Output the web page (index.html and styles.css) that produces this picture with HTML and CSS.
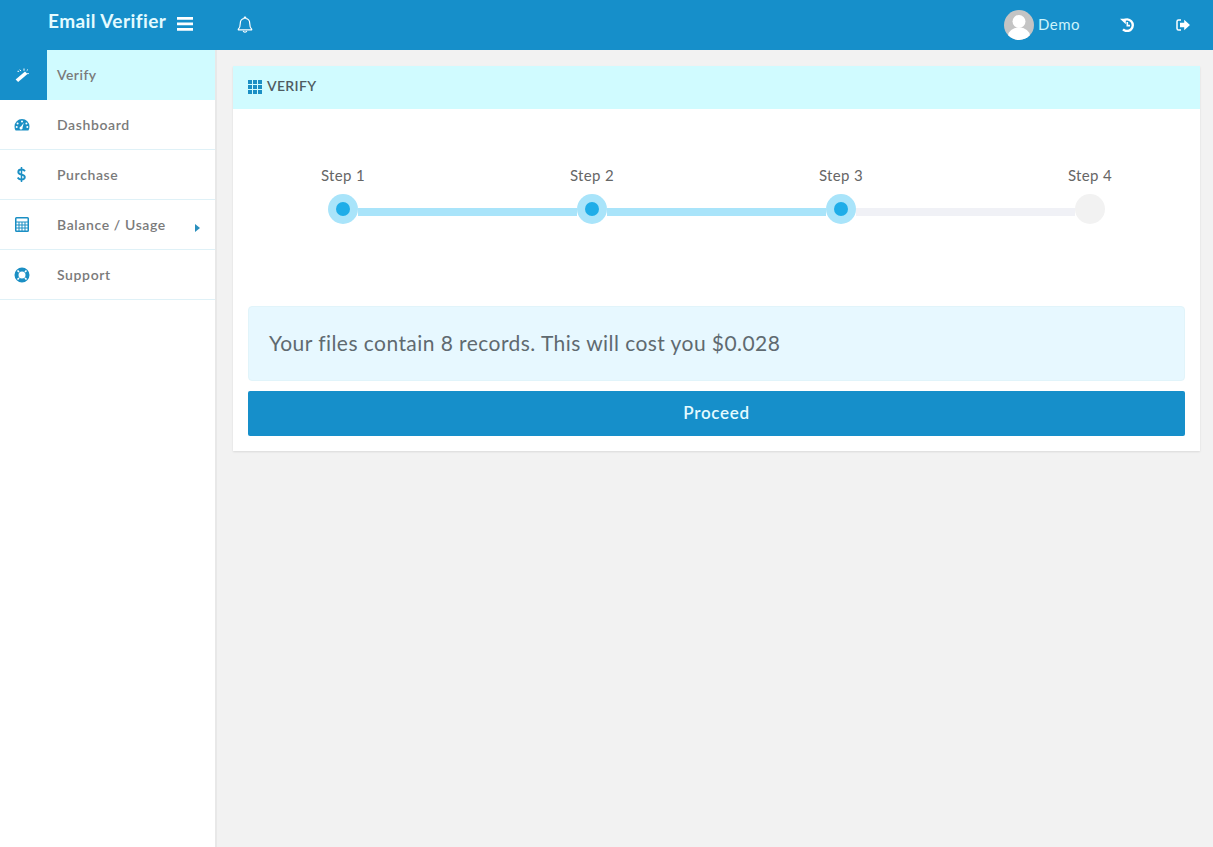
FILE: index.html
```html
<!DOCTYPE html>
<html lang="en">
<head>
<meta charset="utf-8">
<title>Email Verifier</title>
<link rel="stylesheet" href="styles.css">
</head>
<body>
<header class="topbar">
  <div class="brand">
    <span class="brand-name">Email Verifier</span>
    <svg class="ico-menu" viewBox="0 0 16 14"><path d="M0 0h16v2.8H0zM0 5.500h16v2.800H0zM0 11h16v2.800H0z" fill="currentColor"/></svg>
  </div>
  <svg class="ico-bell" viewBox="0 0 16 17"><path d="M8 1.200c.5 0 .8.300.8.800v.5c2.300.4 3.900 2.300 3.900 4.700 0 3 .6 4.700 2 6v.6H1.300v-.6c1.400-1.300 2-3 2-6 0-2.400 1.600-4.300 3.900-4.700V2c0-.5.300-.8.800-.8z" fill="none" stroke="currentColor" stroke-width="1.200" stroke-linejoin="round"/><path d="M6.200 14.900a1.900 1.900 0 0 0 3.600 0" fill="none" stroke="currentColor" stroke-width="1.200"/></svg>
  <div class="top-right">
    <svg class="avatar" viewBox="0 0 30 30"><defs><clipPath id="av"><circle cx="15" cy="15" r="15"/></clipPath></defs><g clip-path="url(#av)"><rect width="30" height="30" fill="#c4c4c4"/><circle cx="15" cy="11.500" r="6.500" fill="#fff"/><ellipse cx="15" cy="26" rx="11" ry="8.500" fill="#fff"/></g></svg>
    <span class="user-name">Demo</span>
    <svg class="ico-history" viewBox="0 0 14 14"><path d="M3.200 2.800A5.800 5.800 0 1 1 3 11.400" fill="none" stroke="currentColor" stroke-width="2.400"/><path d="M0 .8h5.800v5.400z" fill="currentColor"/><path d="M7.300 4v3.600h2.700" fill="none" stroke="currentColor" stroke-width="1.600"/></svg>
    <svg class="ico-signout" viewBox="0 0 14 12"><path d="M5 1H2.600C1.700 1 1 1.700 1 2.600v6.800c0 .9.700 1.600 1.600 1.600H5" fill="none" stroke="currentColor" stroke-width="1.500"/><path d="M8.200.8 14 6l-5.800 5.200V8.200H4V3.800h4.200z" fill="currentColor"/></svg>
  </div>
</header>
<div class="shell">
  <nav class="sidebar">
    <a class="nav-item active"><span class="nav-icon"><svg viewBox="0 0 14 14" width="14" height="14"><path d="M.6 11.400 10 3.600l2.500 2.500-9.400 7.800z" fill="#fff"/><path d="M9 .5v2.200M13.800 5.600h-1.600M4.600 1.800l1.500 1.100M2.500 3.300h1.600M12.900 1.500l-1.200 1.200" stroke="#fff" stroke-width="1"/></svg></span><span class="nav-label">Verify</span></a>
    <a class="nav-item"><span class="nav-icon"><svg viewBox="0 0 16 14" width="16" height="14"><path fill-rule="evenodd" d="M8 1a7.500 7.500 0 0 1 7.500 7.500c0 1.500-.4 2.900-1.100 4H1.600A7.500 7.500 0 0 1 .5 8.500 7.500 7.500 0 0 1 8 1zM8 2.600a1 1 0 1 0 0 2 1 1 0 0 0 0-2zM3.600 4.500a1 1 0 1 0 0 2 1 1 0 0 0 0-2zM12.400 4.500a1 1 0 1 0 0 2 1 1 0 0 0 0-2zM2.700 8a1 1 0 1 0 0 2 1 1 0 0 0 0-2zM13.300 8a1 1 0 1 0 0 2 1 1 0 0 0 0-2zM9.800 4.800 7 8.600a1.500 1.500 0 1 0 1.500 1.100z" fill="currentColor"/></svg></span><span class="nav-label">Dashboard</span></a>
    <a class="nav-item"><span class="nav-icon nav-icon-dollar"><svg viewBox="0 0 9 15" width="9" height="15"><path d="M4.500 0v15" stroke="currentColor" stroke-width="1.500"/><path d="M8 4.200C7.200 3 6 2.500 4.500 2.500 2.700 2.500 1.300 3.400 1.300 5c0 3.500 6.500 1.700 6.500 5 0 1.500-1.400 2.500-3.300 2.500-1.700 0-3-.8-3.800-2" fill="none" stroke="currentColor" stroke-width="1.900"/></svg></span><span class="nav-label">Purchase</span></a>
    <a class="nav-item"><span class="nav-icon"><svg viewBox="0 0 14 15" width="14" height="15"><path fill-rule="evenodd" d="M1.500 0h11A1.500 1.500 0 0 1 14 1.500v12a1.500 1.500 0 0 1-1.500 1.500h-11A1.500 1.500 0 0 1 0 13.500v-12A1.500 1.500 0 0 1 1.500 0zM1.500 1.500v3h11v-3zM1.500 5.500v2h2v-2zM4.500 5.500v2h2v-2zM7.500 5.500v2h2v-2zM10.500 5.500v2h2v-2zM1.500 8.500v2h2v-2zM4.500 8.500v2h2v-2zM7.500 8.500v2h2v-2zM10.500 8.500v2h2v-2zM1.500 11.500v2h2v-2zM4.500 11.500v2h2v-2zM7.500 11.500v2h2v-2zM10.500 11.500v2h2v-2z" fill="currentColor"/></svg></span><span class="nav-label">Balance / Usage</span><span class="caret"></span></a>
    <a class="nav-item"><span class="nav-icon"><svg viewBox="0 0 16 16" width="16" height="16"><circle cx="8" cy="8" r="5.500" fill="none" stroke="currentColor" stroke-width="4"/><path d="M3.500 3.500 5 5M12.500 3.500 11 5M3.500 12.500 5 11M12.500 12.500 11 11" stroke="#fff" stroke-width="1.700"/></svg></span><span class="nav-label">Support</span></a>
  </nav>
  <main class="content">
    <section class="panel">
      <div class="panel-head">
        <svg class="ico-grid" viewBox="0 0 14 14"><path d="M0 0h4v4H0zM5 0h4v4H5zM10 0h4v4h-4zM0 5h4v4H0zM5 5h4v4H5zM10 5h4v4h-4zM0 10h4v4H0zM5 10h4v4H5zM10 10h4v4h-4z" fill="currentColor"/></svg>
        <span>VERIFY</span>
      </div>
      <div class="panel-body">
        <div class="stepper">
          <div class="step done"><span class="step-label">Step 1</span><span class="dot"></span></div>
          <span class="link done"></span>
          <div class="step done"><span class="step-label">Step 2</span><span class="dot"></span></div>
          <span class="link done"></span>
          <div class="step done"><span class="step-label">Step 3</span><span class="dot"></span></div>
          <span class="link"></span>
          <div class="step"><span class="step-label">Step 4</span><span class="dot"></span></div>
        </div>
        <div class="notice">Your files contain 8 records. This will cost you $0.028</div>
        <button class="proceed" type="button">Proceed</button>
      </div>
    </section>
  </main>
</div>
</body>
</html>
```
FILE: styles.css
```css
* { box-sizing: border-box; }
html, body { margin: 0; height: 100%; }
body {
  background: #f2f2f2;
  font-family: "Lato", "Open Sans", sans-serif;
  color: #666;
  overflow: hidden;
}
.topbar {
  height: 50px;
  background: #168fca;
  color: #fff;
  display: flex;
  align-items: center;
}
.brand {
  width: 237px;
  padding-left: 48px;
  display: flex;
  align-items: center;
  flex: none;
  margin-top: -4px;
}
.brand-name { font-size: 19px; font-weight: 700; color: #e4fbff; width: 129px; letter-spacing: .42px; position: relative; top: -3px; }
.ico-menu { width: 16px; height: 14px; margin-top: 2px; }
.ico-bell { width: 16px; height: 17px; margin-top: -1px; }
.top-right { margin-left: auto; display: flex; align-items: center; padding-right: 23px; }
.avatar { width: 30px; height: 30px; }
.user-name { margin-left: 4px; font-size: 15px; color: #cdf4fb; width: 82px; letter-spacing: .5px; position: relative; top: -1px; }
.ico-history { width: 14px; height: 14px; }
.ico-signout { width: 14px; height: 12px; margin-left: 42px; }
.shell { display: flex; height: 797px; }
.sidebar {
  width: 217px;
  flex: none;
  background: #fff;
  border-right: 2px solid #e8e8e8;
}
.nav-item {
  height: 50px;
  display: flex;
  align-items: center;
  border-bottom: 1px solid #dff1f7;
  color: #1b8fc4;
  position: relative;
}
.nav-icon { width: 47px; height: 100%; display: flex; align-items: center; justify-content: center; padding-right: 3px; flex: none; }
.nav-icon-dollar { padding-right: 4px; }
.nav-label { margin-left: 10px; font-size: 14px; font-weight: 600; color: #7a7a7a; letter-spacing: .62px; }
.nav-item.active { background: #d0fbff; border-bottom: 0; }
.nav-item.active .nav-label { position: relative; top: -1px; letter-spacing: .45px; }
.nav-item.active .nav-icon { background: #168fca; }
.caret {
  position: absolute;
  left: 195px;
  top: 24px;
  border-left: 5px solid #2a8fbd;
  border-top: 4px solid transparent;
  border-bottom: 4px solid transparent;
}
.content { flex: 1; padding: 16px 13px 0 16px; }
.panel {
  background: #fff;
  box-shadow: 0 1px 2px rgba(0,0,0,.1);
}
.panel-head {
  height: 43px;
  background: #d0fbff;
  display: flex;
  align-items: center;
  padding: 0 0 4px 15px;
  font-size: 14px;
  font-weight: 600;
  color: #4f5b62;
  letter-spacing: .35px;
}
.ico-grid { width: 14px; height: 14px; color: #1b8fc4; margin-right: 5px; margin-top: 2px; }
.panel-body { padding: 57px 15px 15px; }
.stepper { display: flex; padding: 0 80px; height: 140px; align-items: flex-start; }
.step { width: 30px; flex: none; display: flex; flex-direction: column; align-items: center; }
.step-label { font-size: 15px; line-height: 18px; color: #666; white-space: nowrap; height: 28px; letter-spacing: .35px; }
.dot {
  width: 30px;
  height: 30px;
  border-radius: 50%;
  background: #f2f2f2;
  display: flex;
  align-items: center;
  justify-content: center;
}
.step.done .dot { background: #a9e4fa; }
.step.done .dot::after {
  content: "";
  width: 14px;
  height: 14px;
  border-radius: 50%;
  background: #1fade8;
}
.link { flex: 1; height: 8px; margin-top: 42px; background: #f0f1f6; }
.link.done { background: #a9e4fa; }
.notice {
  height: 75px;
  background: #e7f8ff;
  border: 1px solid #e1f4fa;
  border-radius: 4px;
  padding: 0 0 3px 20px;
  display: flex;
  align-items: center;
  font-size: 21px;
  color: #5f6a70;
  letter-spacing: .44px;
}
.proceed {
  display: block;
  width: 100%;
  height: 45px;
  margin-top: 10px;
  padding-bottom: 3px;
  background: #168fca;
  border: 0;
  border-radius: 2px;
  color: #e4fbff;
  font: 600 17px "Lato", sans-serif;
  letter-spacing: .7px;
}
```
